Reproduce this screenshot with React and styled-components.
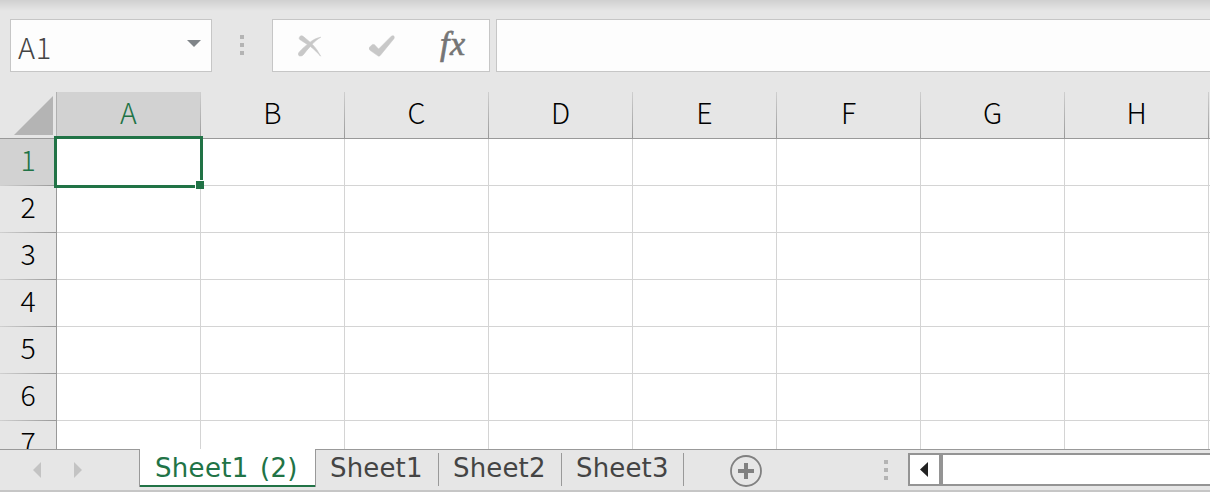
import React from "react";
import styled, { createGlobalStyle } from "styled-components";

const COLORS = {
  chrome: "#e6e6e6",
  chromeSelected: "#d2d2d2",
  field: "#fdfdfd",
  border: "#c6c6c6",
  line: "#999999",
  grid: "#d4d4d4",
  green: "#217346",
  text: "#444444",
};

const COLUMNS = ["A", "B", "C", "D", "E", "F", "G", "H", ""];
const ROWS = [1, 2, 3, 4, 5, 6, 7];
const SHEETS = ["Sheet1", "Sheet2", "Sheet3"];

const App = () => (
  <Window>
    <GlobalStyle />
    <FormulaBar>
      <NameBox>
        <span>A1</span>
        <svg width="14" height="7" viewBox="0 0 14 7">
          <path d="M0 0H14L7 7Z" fill="#7f8488" />
        </svg>
      </NameBox>
      <Grip>
        <Dot />
        <Dot />
        <Dot />
      </Grip>
      <FormulaButtons>
        <CancelIcon />
        <EnterIcon />
        <FunctionLabel>fx</FunctionLabel>
      </FormulaButtons>
      <FormulaInput />
    </FormulaBar>

    <Sheet>
      <HeaderRow>
        <SelectAll>
          <svg width="39" height="39" viewBox="0 0 39 39">
            <path d="M39 0V39H0Z" fill="#b4b4b4" />
          </svg>
        </SelectAll>
        {COLUMNS.map((name, i) => (
          <ColumnHeader key={i} $selected={i === 0}>
            {name}
          </ColumnHeader>
        ))}
      </HeaderRow>
      {ROWS.map((row) => (
        <Row key={row}>
          <RowHeader $selected={row === 1}>{row}</RowHeader>
          {COLUMNS.map((name, i) => (
            <Cell key={i}>
              {row === 1 && i === 0 && (
                <Selection>
                  <FillHandle />
                </Selection>
              )}
            </Cell>
          ))}
        </Row>
      ))}
    </Sheet>

    <Footer>
      <TabNav>
        <svg width="8" height="16" viewBox="0 0 8 16">
          <path d="M8 0V16L0 8Z" fill="#c3c3c3" />
        </svg>
        <svg width="8" height="16" viewBox="0 0 8 16">
          <path d="M0 0V16L8 8Z" fill="#c3c3c3" />
        </svg>
      </TabNav>
      <ActiveTab>Sheet1 (2)</ActiveTab>
      {SHEETS.map((sheet) => (
        <Tab key={sheet}>{sheet}</Tab>
      ))}
      <AddSheet>
        <svg width="32" height="32" viewBox="0 0 32 32">
          <circle cx="16" cy="16" r="15" fill="none" stroke="#808080" strokeWidth="1.8" />
          <path d="M16 8V24M8 16H24" stroke="#808080" strokeWidth="4" />
        </svg>
      </AddSheet>
      <FooterGrip>
        <Dot />
        <Dot />
        <Dot />
      </FooterGrip>
      <ScrollBar>
        <ScrollButton>
          <svg width="8" height="15" viewBox="0 0 8 15">
            <path d="M8 0V15L0 7.5Z" fill="#222222" />
          </svg>
        </ScrollButton>
      </ScrollBar>
    </Footer>
  </Window>
);

const CancelIcon = () => (
  <svg width="24" height="22" viewBox="0 0 24 22">
    <path
      d="M1.4 2.4C2.2.6 4 .4 5.4 1.6L12.1 7.2C15.2 4.7 18.6 3 22.8 2.2C19.4 4.2 16.5 6.6 14.2 9.2C17.5 12.5 20.4 16.7 22.6 21.2C19.4 17.5 15.8 13.9 12.3 11.4C9.8 14 7.6 16.7 5.6 19.4C3.9 21.6.2 21.6.3 18.9C.4 17.3 5.2 12.8 9.4 9.4L2.5 5C1.4 4.3.9 3.5 1.4 2.4Z"
      fill="#c8c8c8"
      stroke="#c8c8c8"
      strokeWidth="0.6"
    />
  </svg>
);

const EnterIcon = () => (
  <svg width="26" height="22" viewBox="0 0 26 22">
    <path
      d="M.4 12.3L3.5 9.4L5.3 9.5L9.6 14L22.3 1.2C23.3.2 25.4.6 25.3 2.2C25.3 3.4 24.8 4 24.1 4.8L11.7 19.9C10.7 21.2 9.6 21.6 8.5 20.6L1 15.3C0 14.4-.2 13.3.4 12.3Z"
      fill="#c8c8c8"
      stroke="#c8c8c8"
      strokeWidth="0.5"
    />
  </svg>
);

const GlobalStyle = createGlobalStyle`
  * {
    box-sizing: border-box;
  }

  body {
    margin: 0;
    overflow: hidden;
  }

  svg {
    display: block;
    flex: none;
  }
`;

const Window = styled.div`
  display: flex;
  flex-direction: column;
  width: 1210px;
  height: 492px;
  overflow: hidden;
  background: linear-gradient(#d0d0d0, ${COLORS.chrome} 11px);
  font-family: "Noto Sans CJK JP", sans-serif;
`;

const FormulaBar = styled.div`
  display: flex;
  flex: none;
  height: 92px;
  padding: 19px 0 20px 10px;
`;

const NameBox = styled.div`
  display: flex;
  justify-content: space-between;
  width: 202px;
  padding: 0 10px 0 7px;
  border: 1px solid ${COLORS.border};
  background: ${COLORS.field};
  color: ${COLORS.text};
  font-size: 29px;
  font-weight: 300;
  letter-spacing: 0.6px;
  line-height: 53px;

  svg {
    margin-top: 20px;
  }
`;

const Grip = styled.div`
  display: flex;
  flex-direction: column;
  gap: 4px;
  width: 4px;
  margin: 16px 28px 0;
`;

const Dot = styled.i`
  width: 4px;
  height: 4px;
  background: #b4b4b4;
`;

const FormulaButtons = styled.div`
  display: flex;
  width: 218px;
  margin-right: 6px;
  padding: 15px 0 0 25px;
  border: 1px solid ${COLORS.border};
  background: ${COLORS.field};

  svg + svg {
    margin-left: 47px;
  }
`;

const FunctionLabel = styled.span`
  margin: -11px 0 0 45px;
  color: #757575;
  font: italic 34px/40px "Liberation Serif", serif;
  letter-spacing: 0.5px;
  -webkit-text-stroke: 0.7px #757575;
`;

const FormulaInput = styled.div`
  flex: 1;
  border: 1px solid ${COLORS.border};
  border-right: none;
  background: ${COLORS.field};
`;

const Sheet = styled.div`
  flex: none;
  width: 1353px;
  height: 357px;
  overflow: hidden;
  background: #ffffff;
`;

const HeaderRow = styled.div`
  display: flex;
  height: 47px;
  border-bottom: 1px solid ${COLORS.line};
  background: ${COLORS.chrome};
`;

const SelectAll = styled.div`
  width: 57px;
  padding: 4px 0 0 14px;
  border-right: 1px solid #b0b0b0;
`;

const ColumnHeader = styled.div`
  width: 144px;
  border-right: 1px solid;
  border-image: linear-gradient(#d0d0d0, ${COLORS.line}) 1;
  background: ${(p) => (p.$selected ? COLORS.chromeSelected : COLORS.chrome)};
  color: ${(p) => (p.$selected ? COLORS.green : "#000000")};
  font-size: 28.5px;
  font-weight: 300;
  line-height: 40px;
  text-align: center;
`;

const Row = styled.div`
  display: flex;
  height: 47px;
`;

const RowHeader = styled.div`
  width: 57px;
  border-right: 1px solid ${COLORS.line};
  background: linear-gradient(to right, #d0d0d0, ${COLORS.line}) bottom / 100% 1px no-repeat
    ${(p) => (p.$selected ? COLORS.chromeSelected : COLORS.chrome)};
  color: ${(p) => (p.$selected ? COLORS.green : "#000000")};
  font-size: 28.5px;
  font-weight: 300;
  line-height: 39px;
  text-align: center;
`;

const Cell = styled.div`
  position: relative;
  width: 144px;
  border-right: 1px solid ${COLORS.grid};
  border-bottom: 1px solid ${COLORS.grid};
`;

const Selection = styled.div`
  position: absolute;
  z-index: 1;
  top: -3px;
  left: -3px;
  width: 149px;
  height: 52px;
  border: 3px solid ${COLORS.green};
`;

const FillHandle = styled.div`
  position: absolute;
  right: -4px;
  bottom: -4px;
  width: 8px;
  height: 8px;
  background: ${COLORS.green};
  box-shadow: -1px -1px 0 #ffffff, 0 -1px 0 #ffffff, -1px 0 0 #ffffff;
`;

const Footer = styled.div`
  display: flex;
  flex: none;
  height: 43px;
  border-top: 1px solid ${COLORS.line};
  border-bottom: 2px solid ${COLORS.border};
  background: ${COLORS.chrome};
  color: ${COLORS.text};
  font-family: "DejaVu Sans", sans-serif;
  font-size: 26px;
  line-height: 36px;
`;

const TabNav = styled.div`
  display: flex;
  gap: 33px;
  width: 139px;
  padding: 12px 0 0 33px;
`;

const ActiveTab = styled.div`
  width: 177px;
  height: 38px;
  margin-top: -1px;
  padding: 1px 0 0 15px;
  border: 1px solid ${COLORS.line};
  border-width: 0 1px;
  background: linear-gradient(${COLORS.green}, ${COLORS.green}) bottom / 100% 2px no-repeat #ffffff;
  color: ${COLORS.green};
  letter-spacing: 0.3px;
  word-spacing: 3px;
  white-space: nowrap;
`;

const Tab = styled.div`
  width: 123px;
  height: 33px;
  margin-top: 3px;
  padding-left: 14px;
  border-right: 1px solid ${COLORS.line};
  letter-spacing: 0.15px;
  line-height: 30px;

  &:nth-child(5) {
    width: 122px;
  }
`;

const AddSheet = styled.div`
  width: 32px;
  margin: 5px 122px 0 46px;
`;

const FooterGrip = styled(Grip)`
  margin: 10px 20px 0 0;
`;

const ScrollBar = styled.div`
  display: flex;
  flex: 1;
  height: 33px;
  margin-top: 3px;
  border: 2px solid #949494;
  border-right: none;
  background: #ffffff;
`;

const ScrollButton = styled.div`
  width: 33px;
  padding: 7px 0 0 10px;
  border-right: 4px solid #949494;
`;

export default App;
